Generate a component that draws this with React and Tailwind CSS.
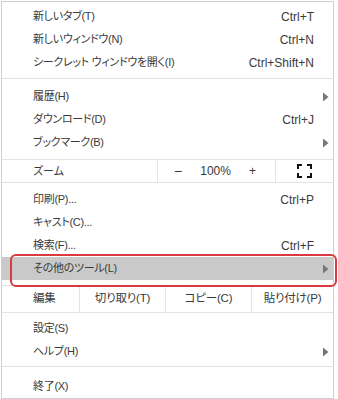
import React from "react";

const font = {
  fontFamily: '"Liberation Sans", "Noto Sans CJK JP", sans-serif',
};

const Arrow = () => (
  <svg width="6" height="9" viewBox="0 0 6 9" className="absolute right-[4px] top-1/2 -translate-y-1/2">
    <path d="M0 0 L5.5 4.5 L0 9 Z" fill="#777" />
  </svg>
);

const Item = ({ label, shortcut, arrow }) => (
  <div className="relative flex h-[23px] items-center pl-[31px] pr-[19px]">
    <span className="flex-1 text-[11px] tracking-[-0.3px]">{label}</span>
    {shortcut && <span>{shortcut}</span>}
    {arrow && <Arrow />}
  </div>
);

const Sep = ({ className }) => <div className={"h-px bg-[#e3e3e3] " + className} />;

const FullscreenIcon = () => (
  <svg width="15" height="14" viewBox="0 0 15 14">
    <path
      d="M1 5 V1 H5 M10 1 H14 V5 M14 9 V13 H10 M5 13 H1 V9"
      fill="none"
      stroke="#111"
      strokeWidth="2"
    />
  </svg>
);

const App = () => {
  return (
    <div className="h-[399px] w-[338px] overflow-hidden bg-white">
      <div
        style={font}
        className="ml-px mt-px w-[333px] border border-[#cfcfcf] bg-white pt-[3px] text-[12px] text-[#3a3a3a] [font-feature-settings:'palt']"
      >
        <Item label="新しいタブ(T)" shortcut="Ctrl+T" />
        <Item label="新しいウィンドウ(N)" shortcut="Ctrl+N" />
        <Item label="シークレット ウィンドウを開く(I)" shortcut="Ctrl+Shift+N" />
        <Sep className="mt-[4px] mb-[6px]" />
        <Item label="履歴(H)" arrow />
        <Item label="ダウンロード(D)" shortcut="Ctrl+J" />
        <Item label="ブックマーク(B)" arrow />
        <Sep className="mt-[5px]" />
        <div className="flex h-[22px] items-center">
          <span className="w-[155px] pl-[31px] text-[11px]">ズーム</span>
          <div className="flex h-full w-[119px] items-center justify-between border-x border-[#e3e3e3] pl-[16px] pr-[19px]">
            <span className="text-[14px]">−</span>
            <span>100%</span>
            <span>+</span>
          </div>
          <div className="flex flex-1 items-center justify-center">
            <FullscreenIcon />
          </div>
        </div>
        <Sep className="mb-[5px]" />
        <Item label="印刷(P)..." shortcut="Ctrl+P" />
        <Item label="キャスト(C)..." />
        <Item label="検索(F)..." shortcut="Ctrl+F" />
        <div className="relative bg-[#c9c9c9]">
          <Item label="その他のツール(L)" arrow />
          <div className="absolute -bottom-[7px] -right-[4px] -top-[3px] left-[8px] rounded-[6px] border-2 border-[#d83a3f]" />
        </div>
        <Sep className="mt-[5px]" />
        <div className="flex h-[26px] items-center text-[11.5px] tracking-[-0.2px]">
          <span className="w-[77px] pl-[31px]">編集</span>
          <span className="flex h-full w-[86px] items-center justify-center border-l border-[#e3e3e3]">切り取り(T)</span>
          <span className="flex h-full w-[86px] items-center justify-center border-l border-[#e3e3e3]">コピー(C)</span>
          <span className="flex h-full flex-1 items-center justify-center border-l border-[#e3e3e3]">貼り付け(P)</span>
        </div>
        <Sep className="mb-[4px]" />
        <Item label="設定(S)" />
        <Item label="ヘルプ(H)" arrow />
        <Sep className="mt-[3px] mb-[8px]" />
        <Item label="終了(X)" />
      </div>
    </div>
  );
};

export default App;
